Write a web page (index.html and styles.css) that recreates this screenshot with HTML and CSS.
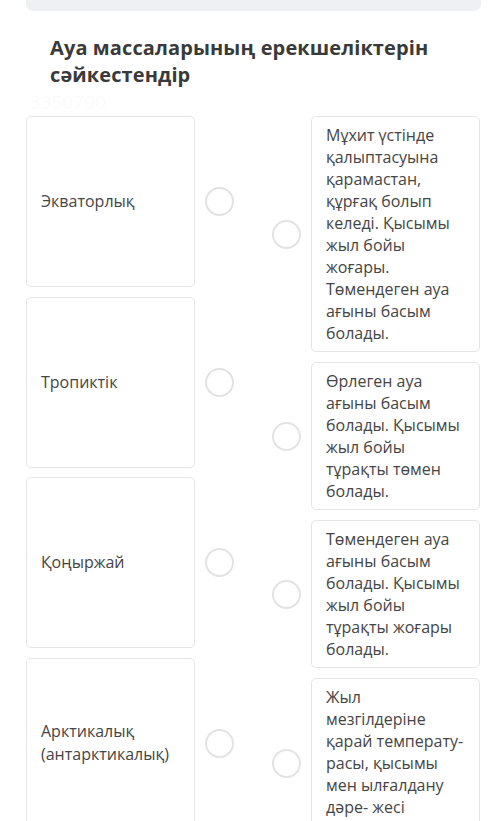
FILE: index.html
```html
<!DOCTYPE html>
<html lang="kk">
<head>
<meta charset="utf-8">
<title>Сәйкестендір</title>
<link rel="stylesheet" href="styles.css">
</head>
<body>
<div class="page">
  <div class="topbar"></div>
  <h1 class="title">Ауа массаларының ерекшеліктерін сәйкестендір</h1>
  <div class="mark">3350790</div>
  <div class="board">
    <div class="col col-left">
      <div class="row-left">
        <div class="card card-left">Экваторлық</div>
        <span class="dot"></span>
      </div>
      <div class="row-left">
        <div class="card card-left">Тропиктік</div>
        <span class="dot"></span>
      </div>
      <div class="row-left">
        <div class="card card-left">Қоңыржай</div>
        <span class="dot"></span>
      </div>
      <div class="row-left">
        <div class="card card-left">Арктикалық (антарктикалық)</div>
        <span class="dot"></span>
      </div>
    </div>
    <div class="col col-right">
      <div class="row-right">
        <span class="dot"></span>
        <div class="card card-right">Мұхит үстінде қалыптасуына қарамастан, құрғақ болып келеді. Қысымы жыл бойы жоғары. Төмендеген ауа ағыны басым болады.</div>
      </div>
      <div class="row-right">
        <span class="dot"></span>
        <div class="card card-right">Өрлеген ауа ағыны басым болады. Қысымы жыл бойы тұрақты төмен болады.</div>
      </div>
      <div class="row-right">
        <span class="dot"></span>
        <div class="card card-right">Төмендеген ауа ағыны басым болады. Қысымы жыл бойы тұрақты жоғары болады.</div>
      </div>
      <div class="row-right">
        <span class="dot"></span>
        <div class="card card-right">Жыл<br>мезгілдеріне қарай температу-расы, қысымы мен ылғалдану дәре- жесі<br>өзгеріп отырады.</div>
      </div>
    </div>
  </div>
</div>
</body>
</html>
```

FILE: styles.css
```css
* { box-sizing: border-box; }
html, body {
  margin: 0;
  padding: 0;
  background: #ffffff;
  overflow: hidden;
}
body {
  font-family: "Open Sans", "Noto Sans", sans-serif;
  color: #454545;
}
.page {
  padding: 0 20px 0 26px;
}
.topbar {
  height: 11px;
  background: #eff0f3;
  border-radius: 0 0 7px 7px;
  margin-right: -1px;
}
.title {
  margin: 23px 0 0 24px;
  font-size: 20px;
  line-height: 27px;
  font-weight: 700;
  color: #3a3a3a;
  letter-spacing: 0.1px;
}
.mark {
  height: 28px;
  margin-left: 4px;
  font-size: 19px;
  line-height: 28px;
  color: #fbfbfb;
}
.board {
  display: flex;
  justify-content: space-between;
}
.col {
  display: flex;
  flex-direction: column;
}
.col-left { gap: 9.5px; }
.col-right { gap: 10px; }
.row-left, .row-right {
  display: flex;
  align-items: center;
  gap: 10px;
}
.card {
  width: 169px;
  background: #fff;
  border: 1.5px solid #e5e5e5;
  border-radius: 5px;
  font-size: 16px;
}
.card-left {
  height: 171px;
  display: flex;
  align-items: center;
  padding: 0 12px 0 14px;
  line-height: 23px;
}
.card-right {
  padding: 6.5px 10px 7.5px 14px;
  line-height: 22px;
}
.dot {
  flex: none;
  width: 29px;
  height: 29px;
  border-radius: 50%;
  border: 2.5px solid #e3e3e3;
  background: #fff;
}
```
